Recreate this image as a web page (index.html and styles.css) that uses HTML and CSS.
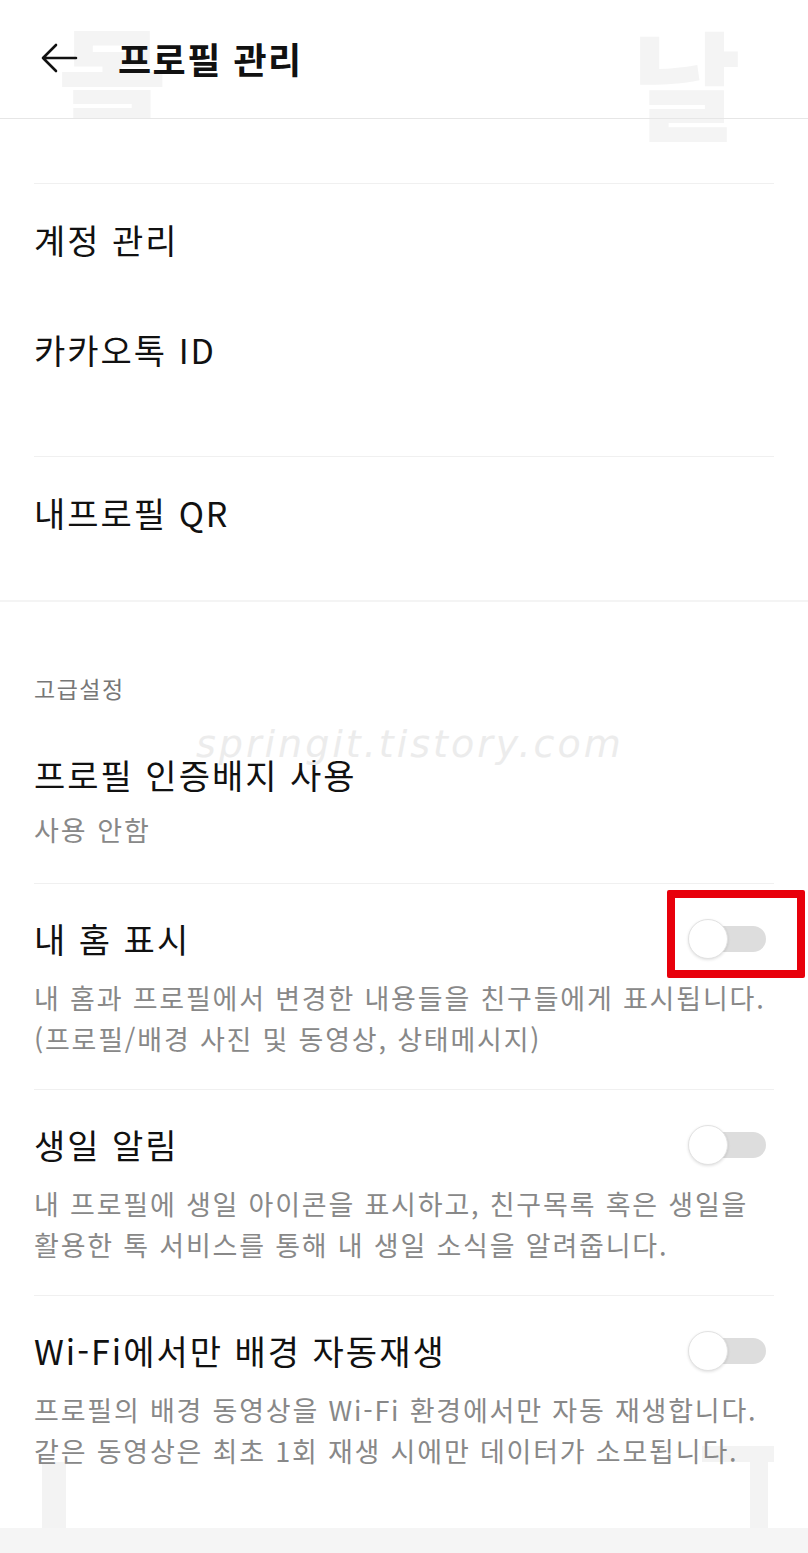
FILE: index.html
```html
<!DOCTYPE html>
<html lang="ko">
<head>
<meta charset="UTF-8" />
<meta name="viewport" content="width=device-width, initial-scale=1.0" />
<title>프로필 관리</title>
<link rel="stylesheet" href="styles.css">
</head>
<body>
<div class="screen">
<!-- 뒤에 비치는 흐린 글자 -->
<span class="ghost ghost-tl">몰</span>
<span class="ghost ghost-tr">날</span>
<span class="ghost-bar ghost-bl"></span>
<span class="ghost-bar ghost-br"></span>
<span class="watermark">springit.tistory.com</span>

<!-- 상단 바 -->
<header class="topbar">
<svg class="back" width="38" height="30" viewBox="0 0 38 30" fill="none" stroke="#111" stroke-width="2.6" stroke-linecap="round" stroke-linejoin="round">
<path d="M36 15H3M16 2L3 15l13 13" />
</svg>
<h1>프로필 관리</h1>
</header>

<div class="spacer"></div>

<!-- 계정 -->
<section class="group group-account">
<div class="row">계정 관리</div>
<div class="row">카카오톡 ID</div>
</section>

<section class="group group-qr">
<div class="title">내프로필 QR</div>
</section>

<!-- 고급설정 -->
<section class="advanced">
<div class="label">고급설정</div>
<div class="title badge-title">프로필 인증배지 사용</div>
<div class="sub">사용 안함</div>
</section>

<section class="setting">
<div class="setting-head">
<div class="title">내 홈 표시</div>
<div class="toggle">
<span class="track"></span>
<span class="knob"></span>
<span class="highlight"></span>
</div>
</div>
<p class="desc">내 홈과 프로필에서 변경한 내용들을 친구들에게 표시됩니다.<br>(프로필/배경 사진 및 동영상, 상태메시지)</p>
</section>

<section class="setting">
<div class="setting-head">
<div class="title">생일 알림</div>
<div class="toggle">
<span class="track"></span>
<span class="knob"></span>
</div>
</div>
<p class="desc">내 프로필에 생일 아이콘을 표시하고, 친구목록 혹은 생일을<br>활용한 톡 서비스를 통해 내 생일 소식을 알려줍니다.</p>
</section>

<section class="setting last">
<div class="setting-head">
<div class="title">Wi-Fi에서만 배경 자동재생</div>
<div class="toggle">
<span class="track"></span>
<span class="knob"></span>
</div>
</div>
<p class="desc">프로필의 배경 동영상을 Wi-Fi 환경에서만 자동 재생합니다.<br>같은 동영상은 최초 1회 재생 시에만 데이터가 소모됩니다.</p>
</section>

<div class="bottom-bar"></div>
</div>
</body>
</html>
```

FILE: styles.css
```css
/* === 기본 === */
body {
  margin: 0;
  padding: 0;
  background-color: #fff;
  font-family: "Noto Sans CJK KR", "Noto Sans", sans-serif;
  color: #111;
}
.screen {
  position: relative;
  width: 808px;
  height: 1553px;
  overflow: hidden;
}

/* === 흐린 배경 글자 / 워터마크 === */
.ghost {
  position: absolute;
  font-size: 118px;
  font-weight: 900;
  color: #f4f4f4;
  line-height: 1;
  z-index: 0;
}
.ghost-tl {
  left: 58px;
  top: 18px;
  height: 101px;
  overflow: hidden;
}
.ghost-tr {
  left: 632px;
  top: 22px;
}
.ghost-bar {
  position: absolute;
  background-color: #f3f3f3;
  z-index: 0;
}
.ghost-bl {
  left: 42px;
  top: 1462px;
  width: 24px;
  height: 70px;
}
.ghost-br {
  left: 702px;
  top: 1446px;
  width: 72px;
  height: 86px;
  background: linear-gradient(#f3f3f3, #f3f3f3) top / 72px 16px no-repeat,
    linear-gradient(#f3f3f3, #f3f3f3) 48px 0 / 18px 86px no-repeat;
}
.watermark {
  position: absolute;
  left: 196px;
  top: 722px;
  font-family: "DejaVu Sans", sans-serif;
  font-style: italic;
  font-size: 38px;
  letter-spacing: 3px;
  color: #ececec;
  z-index: 2;
}

/* === 상단 바 === */
.topbar {
  position: relative;
  z-index: 1;
  height: 119px;
  border-bottom: 1px solid #e6e6e6;
  display: flex;
  align-items: center;
  gap: 40px;
  padding-left: 40px;
  padding-bottom: 2px;
  box-sizing: border-box;
}
.back {
  flex: none;
}
.topbar h1 {
  margin: 0;
  font-size: 36px;
  font-weight: 700;
  letter-spacing: 1.5px;
}
.spacer {
  height: 64px;
}

/* === 목록 === */
.group,
.advanced,
.setting {
  position: relative;
  z-index: 1;
  margin: 0 34px;
}
.group-account {
  border-top: 1px solid #f0f0f0;
  padding-bottom: 52px;
}
.row {
  height: 110px;
  display: flex;
  align-items: center;
  font-size: 34px;
  letter-spacing: 2px;
}
.group-qr {
  border-top: 1px solid #f0f0f0;
  padding: 36px 0 67px;
}
.title {
  font-size: 34px;
  line-height: 40px;
  letter-spacing: 2px;
}
.advanced {
  margin: 0;
  padding: 71px 34px 35px;
  border-top: 2px solid #f4f4f4;
}
.label {
  font-size: 23px;
  line-height: 30px;
  color: #777;
  letter-spacing: 1.5px;
}
.badge-title {
  margin-top: 52px;
}
.sub {
  margin-top: 17px;
  font-size: 27px;
  line-height: 36px;
  color: #888;
  letter-spacing: 2px;
}

/* === 토글 항목 === */
.setting {
  border-top: 1px solid #f0f0f0;
  padding: 35px 0 30px;
}
.setting.last {
  padding-bottom: 0;
}
.setting-head {
  display: flex;
  justify-content: space-between;
  align-items: center;
}
.desc {
  margin: 18px 0 0;
  font-size: 27px;
  line-height: 41px;
  color: #888;
  letter-spacing: 1.8px;
  white-space: nowrap;
}
.toggle {
  position: relative;
  width: 78px;
  height: 40px;
  margin-right: 8px;
}
.track {
  position: absolute;
  right: 0;
  top: 7px;
  width: 66px;
  height: 26px;
  border-radius: 13px;
  background-color: #dddddd;
}
.knob {
  position: absolute;
  left: 0;
  top: 0;
  width: 38px;
  height: 38px;
  border-radius: 50%;
  background-color: #fff;
  border: 1px solid #e2e2e2;
  box-shadow: 0 1px 3px rgba(0, 0, 0, 0.12);
}
/* 빨간 강조 상자 */
.highlight {
  position: absolute;
  left: -21px;
  top: -29px;
  width: 122px;
  height: 72px;
  border: 8px solid #e8000b;
  border-radius: 2px;
}

.bottom-bar {
  position: absolute;
  left: 0;
  bottom: 0;
  width: 100%;
  height: 25px;
  background-color: #f5f5f5;
}
```
